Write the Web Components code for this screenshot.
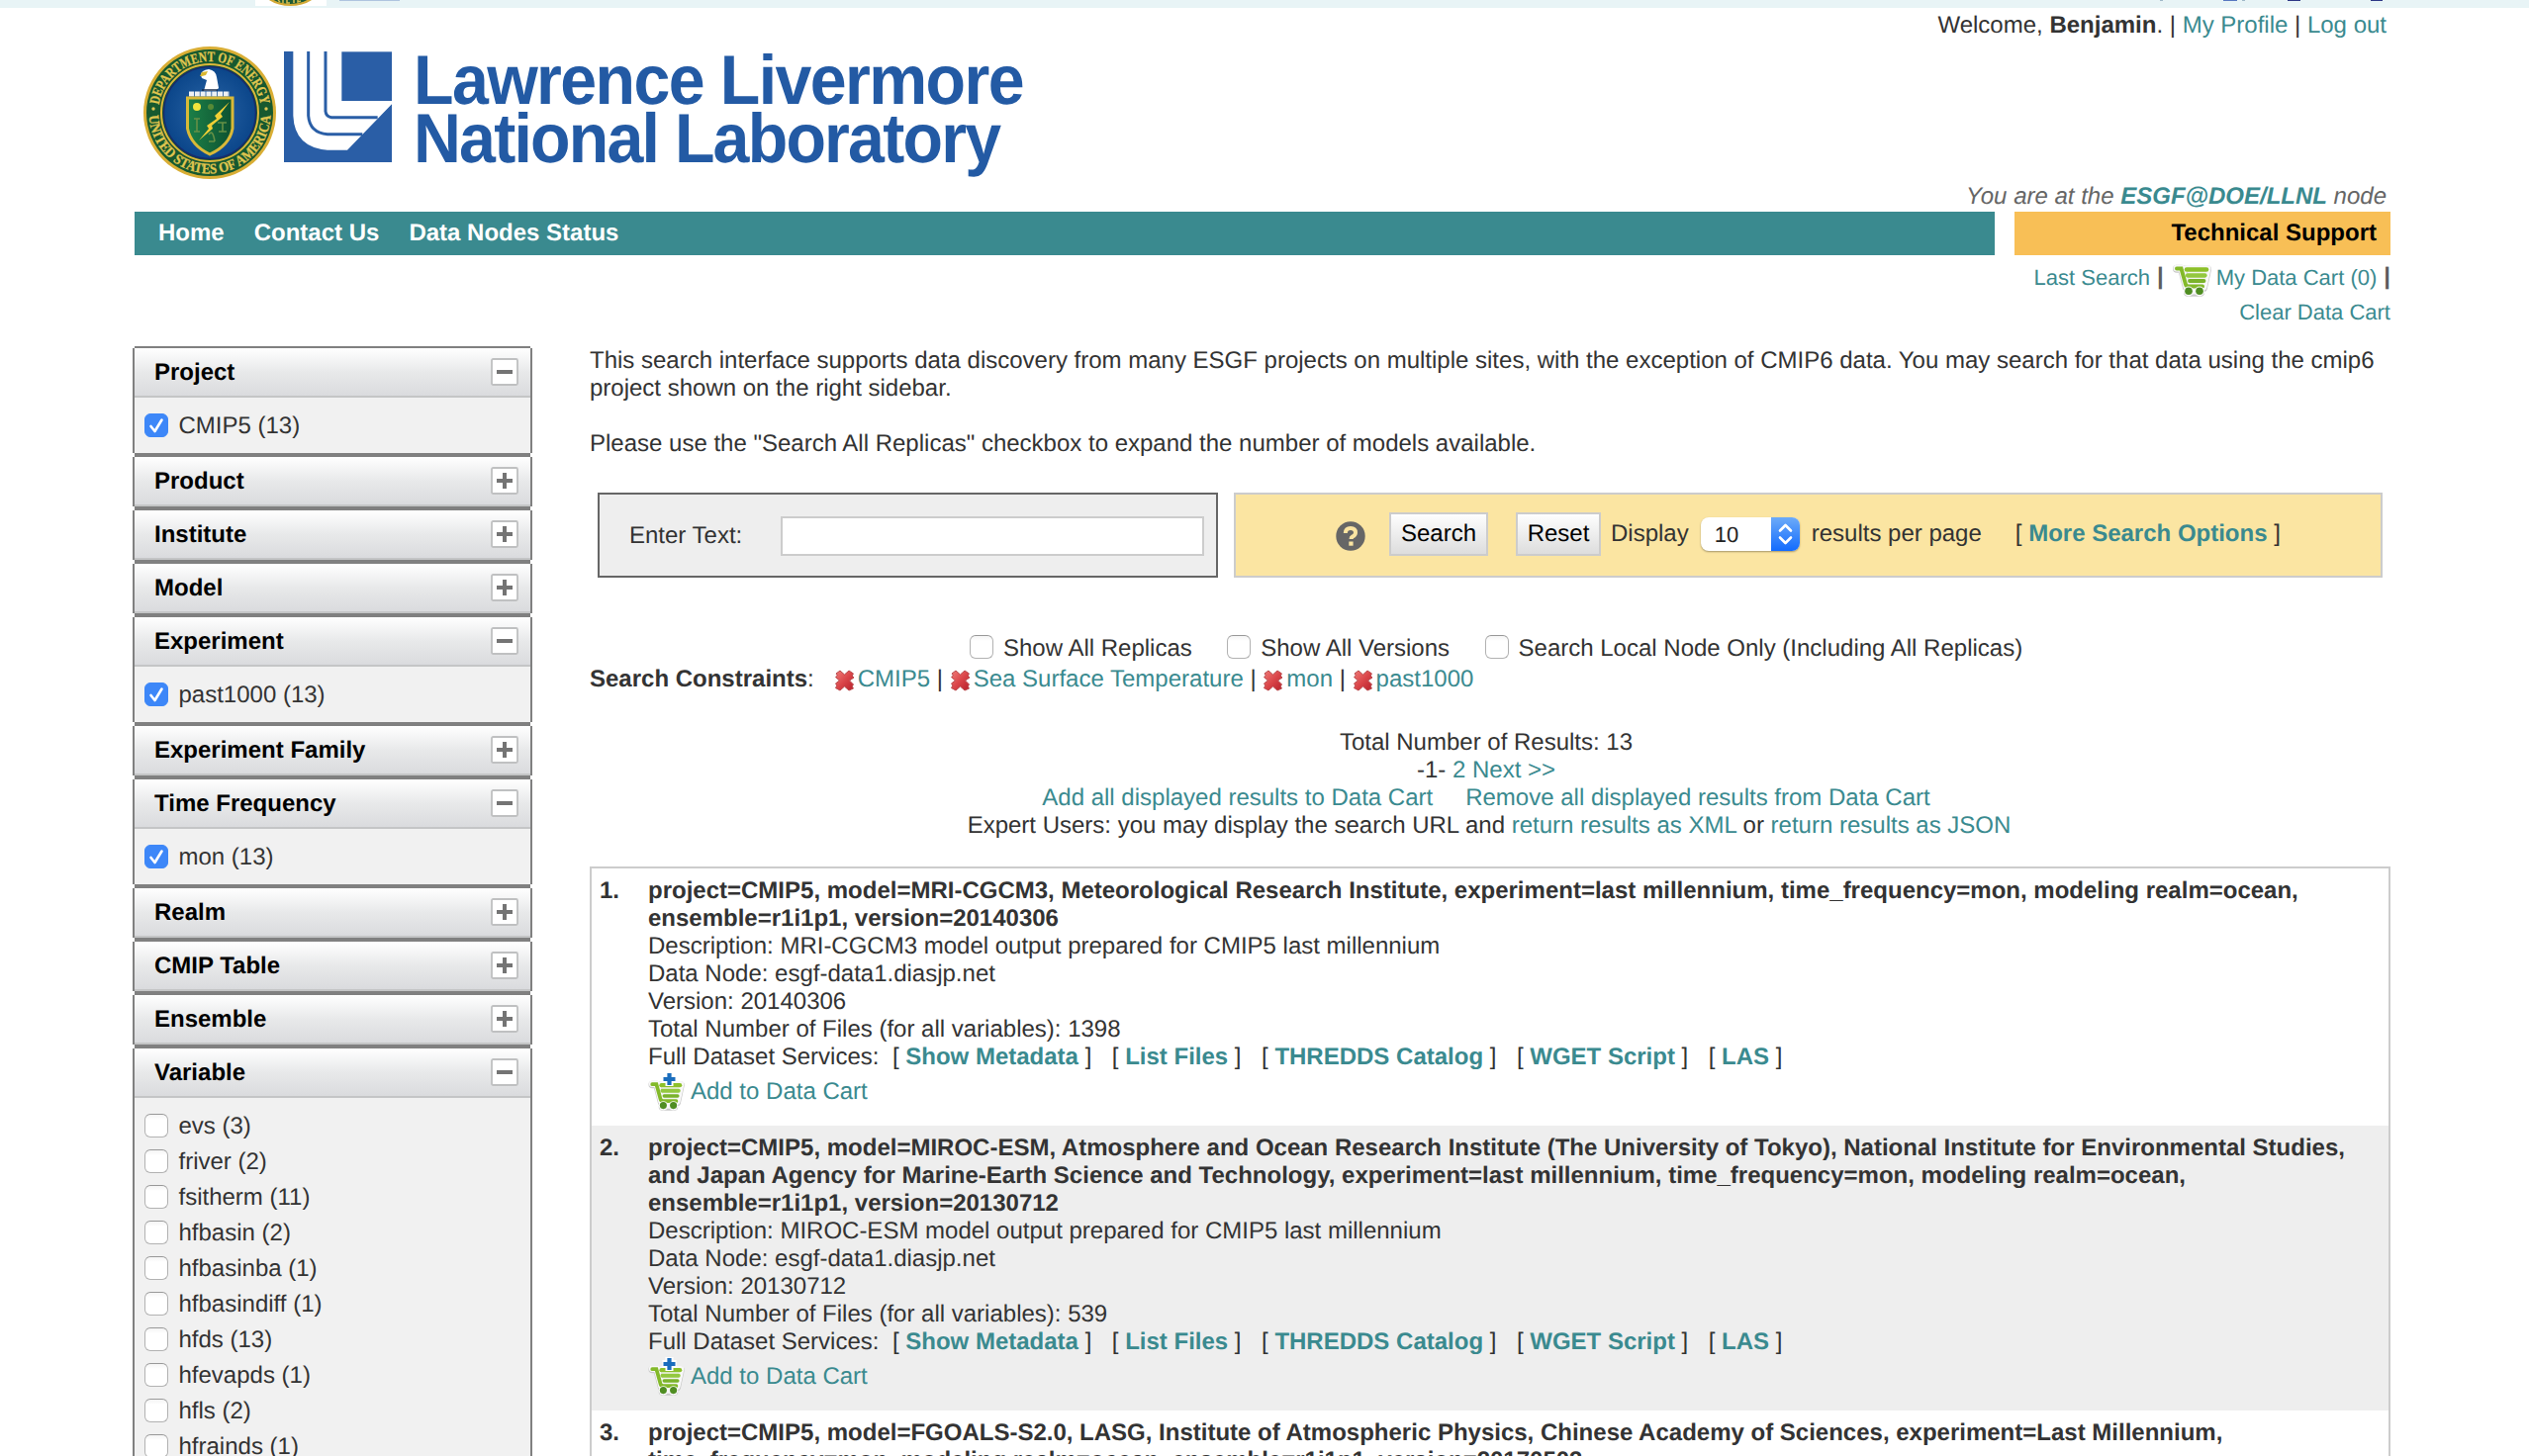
<!DOCTYPE html>
<html lang="en">
<head>
<meta charset="utf-8">
<title>ESGF Search</title>
<style>
html,body{margin:0;padding:0}
body{width:2556px;height:1472px;overflow:hidden;background:#fff;color:#333;
 font:24px/28px "Liberation Sans",Arial,sans-serif;text-rendering:geometricPrecision}
</style>
</head>
<body>
<esgf-page></esgf-page>
<script>
const LINK='a{color:#3a8a8f;text-decoration:none}';
function define(name,html,after){
  customElements.define(name,class extends HTMLElement{
    constructor(){super();this.attachShadow({mode:'open'});}
    connectedCallback(){
      const t=document.createElement('template');
      t.innerHTML=typeof html==='function'?html(this):html;
      this.shadowRoot.replaceChildren(t.content.cloneNode(true));
      if(after)after(this);
    }
  });
}

define('doe-seal',`<style>:host{display:block;width:134px;height:136px;flex:none}svg{display:block}</style>
<svg width="134" height="136" viewBox="0 0 134 136">
<defs><radialGradient id="b"><stop offset="0" stop-color="#4573b4"/><stop offset=".55" stop-color="#195497"/><stop offset="1" stop-color="#0b468a"/></radialGradient>
<linearGradient id="s"><stop offset="0" stop-color="#1c8048"/><stop offset="1" stop-color="#0d5130"/></linearGradient>
<path id="u" d="M15 68A52 52 0 0 1 119 68"/><path id="l" d="M5.500 68A61.500 61.500 0 0 0 128.500 68"/></defs>
<circle cx="67" cy="68" r="67" fill="#d9ae35"/><circle cx="67" cy="68" r="64" fill="#17592f"/>
<circle cx="67" cy="68" r="49" fill="#17592f" stroke="#dcb73c" stroke-width="2"/>
<circle cx="67" cy="68" r="46.500" fill="url(#b)" stroke="#1a2b6b" stroke-width="1.500"/>
<g font-family="'Liberation Serif',serif" font-weight="700" font-size="14.500" fill="#e0c64f" stroke="#e0c64f" stroke-width=".3">
<text><textPath href="#u" startOffset="8" textLength="147" lengthAdjust="spacingAndGlyphs">DEPARTMENT OF ENERGY</textPath></text>
<text><textPath href="#l" startOffset="3" textLength="187" lengthAdjust="spacingAndGlyphs">UNITED STATES OF AMERICA</textPath></text></g>
<circle cx="10" cy="64" r="1.700" fill="#dfc552"/><circle cx="124" cy="64" r="1.700" fill="#dfc552"/>
<path d="M58 30Q58 25 66 24Q73 25 74 32L76 43L73 46H61L64 35L59 33Z" fill="#fff"/>
<path d="M57 31L59 27L65 26L63 30L59 31Z" fill="#d9b62f"/><path d="M59 45H75" stroke="#152b4d" stroke-width="1.500"/>
<path d="M46 49H87" stroke="#eef1f5" stroke-width="5" stroke-dasharray="5 .8"/>
<path d="M44.500 53H90V84Q87 101 67 110Q48 101 44.500 84Z" fill="url(#s)" stroke="#d9b938" stroke-width="3"/>
<circle cx="54" cy="62" r="4" fill="#f1e43c"/><circle cx="68" cy="62" r="3" fill="#578a36"/>
<path d="M87 57L72 71L74 74L64 81L66 84L56 96L70 84L69 81L80 72L78 69Z" fill="#f0cf35"/>
<path d="M54 74V87M51 74H57M51 87H57M75 78H84M80 78V87M76 87H84M66 90Q70 84 72 97M66 97H72" stroke="#659046" stroke-width="1.600" fill="none"/>
</svg>`);

define('llnl-logo',`<style>:host{display:block;flex:none}svg{display:block;overflow:visible}</style>
<svg width="760" height="136" viewBox="0 0 760 136"><g fill="#2a5ea6" transform="translate(0 6) scale(.33333)">
<path d="M0 0H28V195Q32 291 132 299H192L327 160V336H0Z"/><rect x="175" y="1" width="152" height="149"/>
<path d="M74 0V195Q78 247 132 251H238M126 0V182Q128 198 144 200H284" fill="none" stroke="#2a5ea6" stroke-width="9"/></g>
<g fill="#235aa4" transform="translate(131 0) scale(.94 1)" font-family="'Liberation Sans',Arial,sans-serif" font-weight="700" font-size="70.500">
<text x="0" y="58.500" textLength="657" lengthAdjust="spacing">Lawrence Livermore</text>
<text x="0" y="118" textLength="632" lengthAdjust="spacing">National Laboratory</text></g></svg>`);

define('top-strip',`<style>:host{display:flex;height:8px;background:#e8f4f6;overflow:hidden}svg{display:block}</style>
<svg width="2556" height="8"><rect x="258" width="72" height="6" fill="#fff"/>
<ellipse cx="293.500" cy="-14" rx="30" ry="20" fill="#d2a935"/><ellipse cx="293.500" cy="-14.500" rx="27" ry="18.500" fill="#1c5a33"/>
<path d="M281 0L283 2M286 0V3M290 0V3H293M297 0V3M301 0V2L304 1" stroke="#d5bd4d" stroke-width="1.500" fill="none"/>
<rect x="343" width="61" height="1" fill="#afc4df"/><rect x="2183" width="3" height="1" fill="#9fb8c8"/><rect x="2247" width="14" height="1" fill="#5878c0"/><rect x="2266" width="3" height="1" fill="#9fb8c8"/><rect x="2312" width="13" height="1" fill="#2e3786"/><rect x="2396" width="12" height="1" fill="#2e3786"/></svg>`);

define('site-header',`<style>:host{display:flex;height:206px;padding:0 144px 0 145px;box-sizing:border-box}
.logos{display:flex;gap:8px;padding-top:38px;flex:1}
.r{display:flex;flex-direction:column;justify-content:space-between;align-items:flex-end;padding:4px 0 1px;white-space:nowrap}
.n{font-style:italic;color:#666}.n b{color:#3a8a8f}${LINK}</style>
<div class="logos"><doe-seal></doe-seal><llnl-logo></llnl-logo></div>
<div class="r"><div class="w">Welcome, <b>Benjamin</b>. | <a>My Profile</a> | <a>Log out</a></div>
<div class="n">You are at the <b>ESGF@DOE/LLNL</b> node</div></div>`);

define('nav-bar',`<style>:host{display:flex;gap:20px;padding:0 140px 0 136px;height:44px;line-height:44px;font-weight:700}
.m{flex:1;background:#3a8a8f;color:#fff;display:flex;gap:30px;padding-left:24px}
.s{width:366px;padding-right:14px;background:#f8bf56;color:#000;text-align:right}</style>
<div class="m"><span>Home</span><span>Contact Us</span><span>Data Nodes Status</span></div><div class="s">Technical Support</div>`);

const CART=`<g fill="none" stroke-linejoin="round" stroke-linecap="round"><path d="M4 4H9L14 23H30M14 4.500H35L31 23M15 28H28" stroke="#c9c9c9" stroke-width="8" transform="translate(0 .8)"/><path d="M4 4H9L14 23H30M14 4.500H35L31 23M16 27H27" stroke="#f8f8f8" stroke-width="7"/></g>
<path d="M14 5H35L31 21H17Z" fill="#f2f5ee"/>
<g fill="none" stroke-linecap="round"><path d="M4 4.500H8.500L13 20.500Q13.500 22.500 16 22.500H30" stroke-width="4" stroke="#83b92a"/><path d="M14 5.500H34" stroke-width="4.600" stroke="#8cc029"/><path d="M15 11.500H32.500" stroke-width="4.300" stroke="#93c83e"/><path d="M17 17H31.500" stroke-width="3.800" stroke="#7ab22b"/></g>
<circle cx="16" cy="27.500" r="5" fill="#f8f8f8"/><circle cx="27" cy="27.500" r="5" fill="#f8f8f8"/><circle cx="16" cy="27.200" r="3.800" fill="#4f8d22"/><circle cx="27" cy="27.200" r="3.800" fill="#4f8d22"/>`;
define('cart-icon',el=>el.hasAttribute('plus')
?`<style>:host{display:block;flex:none}svg{display:block;overflow:visible}</style><svg width="36" height="40"><g transform="translate(-.5 10) scale(.93 .94)">${CART}</g><path d="M20.500 2V16M13.500 9H27.500" stroke="#fff" stroke-width="8"/><path d="M20.500 3V15M14.500 9H26.500" stroke="#1a6dbd" stroke-width="4.200"/></svg>`
:`<style>:host{display:block;flex:none}svg{display:block;overflow:visible}</style><svg width="38" height="34">${CART}</svg>`);

define('cart-links',`<style>:host{display:flex;flex-direction:column;align-items:flex-end;padding:5px 140px 0 0;height:87px;font-size:22px;line-height:36px}
.l{display:flex;white-space:nowrap;height:35px}.l b{font-size:24px;color:#5c5c5c;line-height:34px}cart-icon{margin:4px 6px 0 9px}b{margin-left:7px}${LINK}</style>
<div class="l"><a>Last Search</a><b>|</b><cart-icon></cart-icon><a>My Data Cart (0)</a><b>|</b></div><a>Clear Data Cart</a>`);

define('check-box',`<style>:host{display:block;flex:none;width:24px;height:24px;box-sizing:border-box;border:1.500px solid #b2b2b2;border-top-color:#999;border-radius:6px;background:linear-gradient(#f4f4f4,#fff 5px)}
:host([checked]){background:#3d87f8;border-color:#3d87f8}svg{display:none}:host([checked]) svg{display:block;margin:-1px}</style>
<svg width="24" height="24"><path d="M6.500 13L10.500 18L17.500 6.500" fill="none" stroke="#fff" stroke-width="2.600" stroke-linecap="round" stroke-linejoin="round"/></svg>`);

define('facet-item',el=>`<style>:host{display:flex;align-items:center;gap:10.500px;height:36px;white-space:nowrap}span{margin-top:2px}</style><check-box ${el.hasAttribute('checked')?'checked':''}></check-box><span><slot></slot></span>`);

define('facet-panel',el=>{const open=el.children.length>0;return `<style>:host{display:block;width:400px;border:2px solid #808080;position:relative}
.h{display:flex;justify-content:space-between;align-items:center;height:48px;padding:0 12px 0 20px;border-bottom:2px solid #c4c5c6;background:linear-gradient(#fff,#e8e9ea 50%,#dadbde);font-weight:700;color:#000}
.h span{margin-top:1px}.c{padding:10px;background:#f1f1f1}svg{display:block}
.k{position:absolute;width:2px;height:2px;background:#fff}</style>
<i class="k" style="left:-2px;top:-2px"></i><i class="k" style="right:-2px;top:-2px"></i><i class="k" style="left:-2px;bottom:-2px"></i><i class="k" style="right:-2px;bottom:-2px"></i>
<div class="h"><span>${el.getAttribute('label')}</span><svg width="28" height="28"><rect x="1" y="1" width="26" height="26" rx="1.500" fill="#fff" stroke="#bfc0c1" stroke-width="1.800"/><path d="M6 14H22${open?'':'M14 6V22'}" stroke="#747474" stroke-width="4"/></svg></div>
${open?'<div class="c"><slot></slot></div>':''}`});

define('facet-list',`<style>:host{display:block;width:404px;flex:none}</style>
<facet-panel label="Project"><facet-item checked>CMIP5 (13)</facet-item></facet-panel>
<facet-panel label="Product"></facet-panel><facet-panel label="Institute"></facet-panel><facet-panel label="Model"></facet-panel>
<facet-panel label="Experiment"><facet-item checked>past1000 (13)</facet-item></facet-panel>
<facet-panel label="Experiment Family"></facet-panel>
<facet-panel label="Time Frequency"><facet-item checked>mon (13)</facet-item></facet-panel>
<facet-panel label="Realm"></facet-panel><facet-panel label="CMIP Table"></facet-panel><facet-panel label="Ensemble"></facet-panel>
<facet-panel label="Variable">${['evs (3)','friver (2)','fsitherm (11)','hfbasin (2)','hfbasinba (1)','hfbasindiff (1)','hfds (13)','hfevapds (1)','hfls (2)','hfrainds (1)'].map(v=>`<facet-item>${v}</facet-item>`).join('')}</facet-panel>`);

define('push-button',`<style>:host{display:block;box-sizing:border-box;height:44px;border:2px solid #ccc;background:linear-gradient(#fefefe,#ddd);color:#000;text-align:center;line-height:40px;flex:none}</style><slot></slot>`);

define('page-select',`<style>:host{display:flex;width:100px;height:34px;border-radius:8px;overflow:hidden;background:#fff;box-shadow:0 1px 2px rgba(0,0,0,.35);flex:none;font-size:22px;line-height:35px;color:#222}
span{flex:1;padding-left:14px}svg{display:block}</style>
<span><slot></slot></span><svg width="29" height="34"><defs><linearGradient id="g" x2="0" y2="1"><stop stop-color="#6cabf8"/><stop offset="1" stop-color="#126bfe"/></linearGradient></defs><rect width="29" height="34" fill="url(#g)"/><path d="M9 13.500L14.500 8L20 13.500M9 20.500L14.500 26L20 20.500" fill="none" stroke="#fff" stroke-width="2.600" stroke-linecap="round" stroke-linejoin="round"/></svg>`);

define('search-form',`<style>:host{display:flex;gap:16px;height:86px;padding:0 8px;white-space:nowrap}
.t,.o{box-sizing:border-box;display:flex;border:2px solid}.t{width:627px;border-color:#666;background:#eee;padding:22px 12px 0 30px;justify-content:space-between}
.t span{line-height:40px}.f{width:424px;height:36px;border:2px solid #ccc;background:#fff}
.o{width:1161px;border-color:#ccc;background:#fbe5a2;padding-top:18px;align-items:flex-start}
.o>span{line-height:44px}.q{margin:9px 24px 0 101px}svg{display:block}b{font-weight:700}${LINK}</style>
<div class="t"><span>Enter Text:</span><div class="f"></div></div>
<div class="o"><svg class="q" width="30" height="30"><circle cx="15" cy="15" r="14.700" fill="#666"/><path d="M9.800 12Q10 7 15 7Q20 7 20 11.500Q20 14 17 15.500Q15.500 16.500 15.500 18" fill="none" stroke="#fbe5a2" stroke-width="4"/><rect x="13.300" y="20.500" width="4.300" height="4.200" fill="#fbe5a2"/></svg>
<push-button style="width:100px">Search</push-button><push-button style="width:86px;margin-left:28px">Reset</push-button>
<span style="margin:0 12px 0 10px">Display</span><page-select style="margin-top:5px">10</page-select>
<span style="margin-left:12px">results per page</span><span style="margin-left:34px">[ <b><a>More Search Options</a></b> ]</span></div>`);

define('search-flags',`<style>:host{display:flex;height:28px;margin:57px 0 0 384px;white-space:nowrap}check-box{margin-top:1px}span{margin:1px 35.500px 0 10px}</style>
<check-box></check-box><span>Show All Replicas</span><check-box></check-box><span>Show All Versions</span><check-box></check-box><span>Search Local Node Only (Including All Replicas)</span>`);

define('remove-icon',`<style>:host{display:inline-block;width:21px;height:22px;margin:0 3px 0 0;vertical-align:-5px}svg{display:block}</style>
<svg width="21" height="22"><defs><linearGradient id="r" x2="1" y2="1"><stop stop-color="#f07c78"/><stop offset=".5" stop-color="#da4549"/><stop offset="1" stop-color="#b61f2a"/></linearGradient></defs><path d="M2 4L6 1L10.500 5L15 1L19.500 4L18 6L20 8L15.500 11L19.500 15L18 17L19.500 19L15 21L10.500 17L6 21L1.500 18.500L3 16L1.500 14L5.500 11L1.500 7.500L3.500 6Z" fill="url(#r)" stroke="#b9474a" stroke-width="1"/></svg>`);

define('constraint-bar',`<style>:host{display:flex;height:28px;margin-top:4px;white-space:nowrap}.i{margin-left:20px}${LINK}</style>
<span><b>Search Constraints</b>:</span><span class="i"><remove-icon></remove-icon><a>CMIP5</a> | <remove-icon></remove-icon><a>Sea Surface Temperature</a> | <remove-icon></remove-icon><a>mon</a> | <remove-icon></remove-icon><a>past1000</a></span>`);

define('result-summary',`<style>:host{display:block;width:1812px;text-align:center;margin:36px 0 27px;height:112px;white-space:nowrap}div{height:28px}.e{padding-left:6px}.a{margin-right:33px}${LINK}</style>
<div>Total Number of Results: 13</div><div>-1- <a>2</a> <a>Next &gt;&gt;</a></div>
<div><a class="a">Add all displayed results to Data Cart</a><a>Remove all displayed results from Data Cart</a></div>
<div class="e">Expert Users: you may display the search URL and <a>return results as XML</a> or <a>return results as JSON</a></div>`);

define('result-row',el=>`<style>:host{display:flex;padding:9px 0 15px 8px;white-space:nowrap}:host([alt]){background:#eee}
.n{width:49px;font-weight:700;flex:none}.s{display:flex;gap:20.500px}.s b{color:#3a8a8f}.s>span:first-child{margin-right:-7px}.c{display:flex;height:40px;line-height:36px;gap:6px;padding-left:1px}.c a{padding-top:3px}cart-icon{margin-top:-1px}${LINK}</style>
<div class="n">${el.getAttribute('n')}.</div><div><slot></slot>
<div class="s"><span>Full Dataset Services: </span>${['Show Metadata','List Files','THREDDS Catalog','WGET Script','LAS'].map(s=>`<span>[ <b>${s}</b> ]</span>`).join('')}</div>
<div class="c"><cart-icon plus></cart-icon><a>Add to Data Cart</a></div></div>`);

define('result-list',`<style>:host{display:block;border:2px solid #ccc;border-bottom:0}</style>
<result-row n="1"><b>project=CMIP5, model=MRI-CGCM3, Meteorological Research Institute, experiment=last millennium, time_frequency=mon, modeling realm=ocean,<br>ensemble=r1i1p1, version=20140306</b><br>Description: MRI-CGCM3 model output prepared for CMIP5 last millennium<br>Data Node: esgf-data1.diasjp.net<br>Version: 20140306<br>Total Number of Files (for all variables): 1398</result-row>
<result-row n="2" alt><b>project=CMIP5, model=MIROC-ESM, Atmosphere and Ocean Research Institute (The University of Tokyo), National Institute for Environmental Studies,<br>and Japan Agency for Marine-Earth Science and Technology, experiment=last millennium, time_frequency=mon, modeling realm=ocean,<br>ensemble=r1i1p1, version=20130712</b><br>Description: MIROC-ESM model output prepared for CMIP5 last millennium<br>Data Node: esgf-data1.diasjp.net<br>Version: 20130712<br>Total Number of Files (for all variables): 539</result-row>
<result-row n="3"><b>project=CMIP5, model=FGOALS-S2.0, LASG, Institute of Atmospheric Physics, Chinese Academy of Sciences, experiment=Last Millennium,<br>time_frequency=mon, modeling realm=ocean, ensemble=r1i1p1, version=20170503</b></result-row>`);

define('search-main',`<style>:host{display:block;width:1820px;padding-top:1px}p{margin:0 0 28px;white-space:nowrap}p+p{margin-bottom:35px}</style>
<p>This search interface supports data discovery from many ESGF projects on multiple sites, with the exception of CMIP6 data. You may search for that data using the cmip6<br>project shown on the right sidebar.</p>
<p>Please use the "Search All Replicas" checkbox to expand the number of models available.</p>
<search-form></search-form><search-flags></search-flags><constraint-bar></constraint-bar><result-summary></result-summary><result-list></result-list>`);

define('esgf-page',`<style>:host{display:block;height:1472px;overflow:hidden}.b{display:flex;gap:58px;padding-left:134px;align-items:flex-start}</style>
<top-strip></top-strip><site-header></site-header><nav-bar></nav-bar><cart-links></cart-links>
<div class="b"><facet-list></facet-list><search-main></search-main></div>`);
</script>
</body>
</html>
